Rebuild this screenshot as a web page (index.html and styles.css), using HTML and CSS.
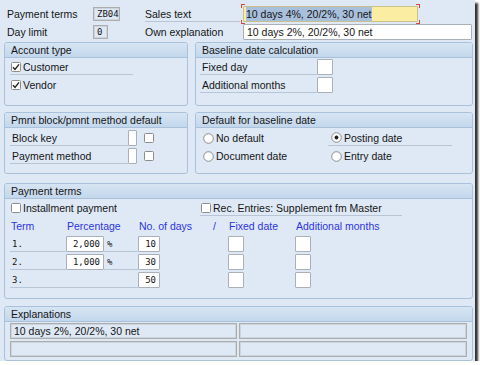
FILE: index.html
```html
<!DOCTYPE html>
<html lang="en">
<head>
    <meta charset="UTF-8">
    <title>Payment terms</title>
    <link rel="stylesheet" href="styles.css">
</head>
<body>
    <div class="window">
        <div class="head">
            <span>Payment terms</span>
            <span class="field ro mono w-key">ZB04</span>
            <span class="underline">Sales text</span>
            <span class="focus"><span class="field edit w-sales"><span class="sel">10 days 4%, 20/2%, 30 net</span></span></span>

            <span>Day limit</span>
            <span class="field ro mono w-day">0</span>
            <span>Own explanation</span>
            <span class="field edit w-own">10 days 2%, 20/2%, 30 net</span>
        </div>

        <div class="cols h-64">
            <div class="group left">
                <div class="group-title">Account type</div>
                <div class="group-body">
                    <div class="row">
                        <label class="check underline w-cust">
                            <svg width="10" height="10" viewBox="0 0 10 10"><rect x="0.5" y="0.5" width="9" height="9" rx="1" fill="#fff" stroke="#8c8c8c"/><path d="M2 5.2 L4 7.4 L8 2.4" fill="none" stroke="#222" stroke-width="1.4"/></svg>
                            Customer
                        </label>
                    </div>
                    <div class="row">
                        <label class="check">
                            <svg width="10" height="10" viewBox="0 0 10 10"><rect x="0.5" y="0.5" width="9" height="9" rx="1" fill="#fff" stroke="#8c8c8c"/><path d="M2 5.2 L4 7.4 L8 2.4" fill="none" stroke="#222" stroke-width="1.4"/></svg>
                            Vendor
                        </label>
                    </div>
                </div>
            </div>
            <div class="group right">
                <div class="group-title">Baseline date calculation</div>
                <div class="group-body pad-4">
                    <div class="row">
                        <span class="lbl underline w-base">Fixed day</span>
                        <span class="field edit box"></span>
                    </div>
                    <div class="row">
                        <span class="lbl underline w-base">Additional months</span>
                        <span class="field edit box"></span>
                    </div>
                </div>
            </div>
        </div>

        <div class="cols h-62 gap-6">
            <div class="group left">
                <div class="group-title">Pmnt block/pmnt method default</div>
                <div class="group-body top-2">
                    <div class="row">
                        <span class="lbl underline w-block">Block key</span>
                        <span class="field edit slim"></span>
                        <svg class="tick" width="10" height="10" viewBox="0 0 10 10"><rect x="0.5" y="0.5" width="9" height="9" rx="1" fill="#fff" stroke="#8c8c8c"/></svg>
                    </div>
                    <div class="row">
                        <span class="lbl underline w-block">Payment method</span>
                        <span class="field edit slim"></span>
                        <svg class="tick" width="10" height="10" viewBox="0 0 10 10"><rect x="0.5" y="0.5" width="9" height="9" rx="1" fill="#fff" stroke="#8c8c8c"/></svg>
                    </div>
                </div>
            </div>
            <div class="group right">
                <div class="group-title">Default for baseline date</div>
                <div class="group-body top-2">
                    <div class="radios">
                        <label class="check">
                            <svg width="11" height="11" viewBox="0 0 11 11"><circle cx="5.5" cy="5.5" r="4.8" fill="#fff" stroke="#8c8c8c"/></svg>
                            No default
                        </label>
                        <label class="check underline pad-3">
                            <svg width="11" height="11" viewBox="0 0 11 11"><circle cx="5.5" cy="5.5" r="4.8" fill="#fff" stroke="#8c8c8c"/><circle cx="5.5" cy="5.5" r="1.9" fill="#222"/></svg>
                            Posting date
                        </label>
                        <label class="check">
                            <svg width="11" height="11" viewBox="0 0 11 11"><circle cx="5.5" cy="5.5" r="4.8" fill="#fff" stroke="#8c8c8c"/></svg>
                            Document date
                        </label>
                        <label class="check pad-3">
                            <svg width="11" height="11" viewBox="0 0 11 11"><circle cx="5.5" cy="5.5" r="4.8" fill="#fff" stroke="#8c8c8c"/></svg>
                            Entry date
                        </label>
                    </div>
                </div>
            </div>
        </div>

        <div class="group h-116 gap-9">
            <div class="group-title">Payment terms</div>
            <div class="group-body">
                <div class="row">
                    <label class="check w-inst">
                        <svg width="10" height="10" viewBox="0 0 10 10"><rect x="0.5" y="0.5" width="9" height="9" rx="1" fill="#fff" stroke="#8c8c8c"/></svg>
                        Installment payment
                    </label>
                    <label class="check underline w-rec">
                        <svg width="10" height="10" viewBox="0 0 10 10"><rect x="0.5" y="0.5" width="9" height="9" rx="1" fill="#fff" stroke="#8c8c8c"/></svg>
                        Rec. Entries: Supplement fm Master
                    </label>
                </div>
                <div class="terms">
                    <span class="th lbl">Term</span>
                    <span class="th">Percentage</span>
                    <span></span>
                    <span class="th">No. of days</span>
                    <span class="th slash">/</span>
                    <span class="th">Fixed date</span>
                    <span></span>
                    <span class="th">Additional months</span>

                    <span class="lbl underline mono">1.</span>
                    <span class="field edit mono num">2,000</span>
                    <span class="underline mono pct">%</span>
                    <span class="field edit mono num">10</span>
                    <span></span>
                    <span class="field edit box"></span>
                    <span></span>
                    <span class="field edit box"></span>

                    <span class="lbl underline mono">2.</span>
                    <span class="field edit mono num">1,000</span>
                    <span class="underline mono pct">%</span>
                    <span class="field edit mono num">30</span>
                    <span></span>
                    <span class="field edit box"></span>
                    <span></span>
                    <span class="field edit box"></span>

                    <span class="lbl underline mono span-3">3.</span>
                    <span class="field edit mono num">50</span>
                    <span></span>
                    <span class="field edit box"></span>
                    <span></span>
                    <span class="field edit box"></span>
                </div>
            </div>
        </div>

        <div class="group h-55 gap-7">
            <div class="group-title">Explanations</div>
            <div class="group-body">
                <div class="expl">
                    <span class="field ro">10 days 2%, 20/2%, 30 net</span>
                    <span class="field ro"></span>
                    <span class="field ro"></span>
                    <span class="field ro"></span>
                </div>
            </div>
        </div>
    </div>
</body>
</html>
```

FILE: styles.css
```css
body {
    margin: 0;
    background: #fff;
    font-family: "Liberation Sans", Arial, sans-serif;
    font-size: 10.5px;
    color: #151515;
}
.window {
    width: 469px;
    height: 355px;
    padding: 6px 2px 0 4px;
    background: #dfe9f5;
    box-shadow: 3px 3px 2px rgba(0, 0, 0, 0.8);
}
.mono {
    font-family: "DejaVu Sans Mono", "Liberation Mono", monospace;
    font-size: 9px;
}
.head {
    display: grid;
    grid-template-columns: 86px 52px 98px auto;
    grid-auto-rows: 16px;
    row-gap: 2px;
    align-items: center;
    margin-left: 3px;
}
.head > span {
    white-space: nowrap;
}
.underline {
    border-bottom: 1px solid #b7c5d4;
    box-sizing: border-box;
}
.head .underline {
    height: 16px;
    line-height: 16px;
    margin-right: 3px;
}

/* fields */
.field {
    display: block;
    box-sizing: border-box;
    height: 16px;
    line-height: 14px;
    white-space: nowrap;
    overflow: hidden;
}
.field.edit {
    background: #fff;
    border: 1px solid #a9b0b8;
    border-radius: 1px;
    padding: 0 3px;
}
.field.ro {
    background: #dfe9f5;
    border: 1px solid #adadad;
    box-shadow: inset 0 0 0 1px #ccd5de;
    padding: 0 3px;
}
.w-key {
    width: 27px;
    height: 14px;
    line-height: 12px;
}
.w-day {
    width: 15px;
    height: 14px;
    line-height: 12px;
}
.w-sales {
    width: 175px;
    background: #fbeda2 !important;
    border-color: #c9c08a !important;
    padding: 0 2px !important;
}
.sel {
    background: #a9c0dc;
    padding: 1px 0;
}
.w-own {
    width: 229px;
}
.focus {
    display: block;
    width: 175px;
    padding: 2px;
    margin: -2px 0 -2px -2px;
    background:
        linear-gradient(#d9443b, #d9443b) left top / 4px 1px no-repeat,
        linear-gradient(#d9443b, #d9443b) left top / 1px 4px no-repeat,
        linear-gradient(#d9443b, #d9443b) right top / 4px 1px no-repeat,
        linear-gradient(#d9443b, #d9443b) right top / 1px 4px no-repeat,
        linear-gradient(#d9443b, #d9443b) left bottom / 4px 1px no-repeat,
        linear-gradient(#d9443b, #d9443b) left bottom / 1px 4px no-repeat,
        linear-gradient(#d9443b, #d9443b) right bottom / 4px 1px no-repeat,
        linear-gradient(#d9443b, #d9443b) right bottom / 1px 4px no-repeat;
}
.box {
    width: 16px;
    padding: 0 !important;
}
.slim {
    width: 9px;
    padding: 0 !important;
}
.num {
    text-align: right;
}

/* groups */
.cols {
    display: flex;
    gap: 7px;
    margin-top: 2px;
}
.group {
    box-sizing: border-box;
    border: 1px solid #a9c1da;
    border-radius: 3px;
    background: #dfe9f5;
    overflow: hidden;
}
.left {
    width: 184px;
}
.right {
    flex: 1;
}
.h-64 { height: 64px; }
.h-62 { height: 62px; }
.h-116 { height: 116px; }
.h-55 { height: 55px; }
.gap-6 { margin-top: 6px; }
.gap-9 { margin-top: 9px; }
.gap-7 { margin-top: 7px; }
.group-title {
    height: 14px;
    line-height: 14px;
    padding-left: 6px;
    background: linear-gradient(#d7e5f3, #c3d7ec);
    border-bottom: 1px solid #a9c1da;
    white-space: nowrap;
}
.group-body {
    display: flex;
    flex-direction: column;
    gap: 2px;
    padding: 1px 5px 0;
}
.group-body.pad-4 {
    padding-left: 4px;
}
.group-body.top-2 {
    padding-top: 2px;
}
.row {
    display: flex;
    align-items: center;
    height: 16px;
}
.lbl {
    display: block;
    height: 16px;
    line-height: 16px;
    padding-left: 2px;
    box-sizing: border-box;
    white-space: nowrap;
}
.check {
    display: flex;
    align-items: center;
    gap: 2px;
    height: 16px;
    box-sizing: border-box;
    white-space: nowrap;
}
.check svg {
    margin-left: 1px;
    flex: none;
}
.w-cust { width: 123px; }
.w-base { width: 117px; }
.w-block { width: 118px; }
.w-inst { width: 190px; }
.w-rec { width: 202px; }
.tick {
    margin-left: 7px;
}
.radios {
    display: grid;
    grid-template-columns: 126px 124px;
    grid-auto-rows: 16px;
    row-gap: 2px;
    padding-left: 1px;
}
.pad-3 {
    padding-left: 2px;
}

/* payment terms table */
.terms {
    display: grid;
    grid-template-columns: 56px 38px 34px 22px 68px 16px 51px 16px;
    grid-auto-rows: 16px;
    row-gap: 2px;
    align-items: center;
}
.th {
    color: #2c34e0;
    white-space: nowrap;
    padding-left: 1px;
}
.th.lbl {
    line-height: 16px;
}
.slash {
    justify-self: end;
    margin-right: 12px;
}
.pct {
    height: 16px;
    line-height: 16px;
    padding-left: 3px;
}
.span-3 {
    grid-column: span 3;
}

/* explanations */
.expl {
    display: grid;
    grid-template-columns: 227px 228px;
    grid-auto-rows: 16px;
    gap: 2px;
}
```
